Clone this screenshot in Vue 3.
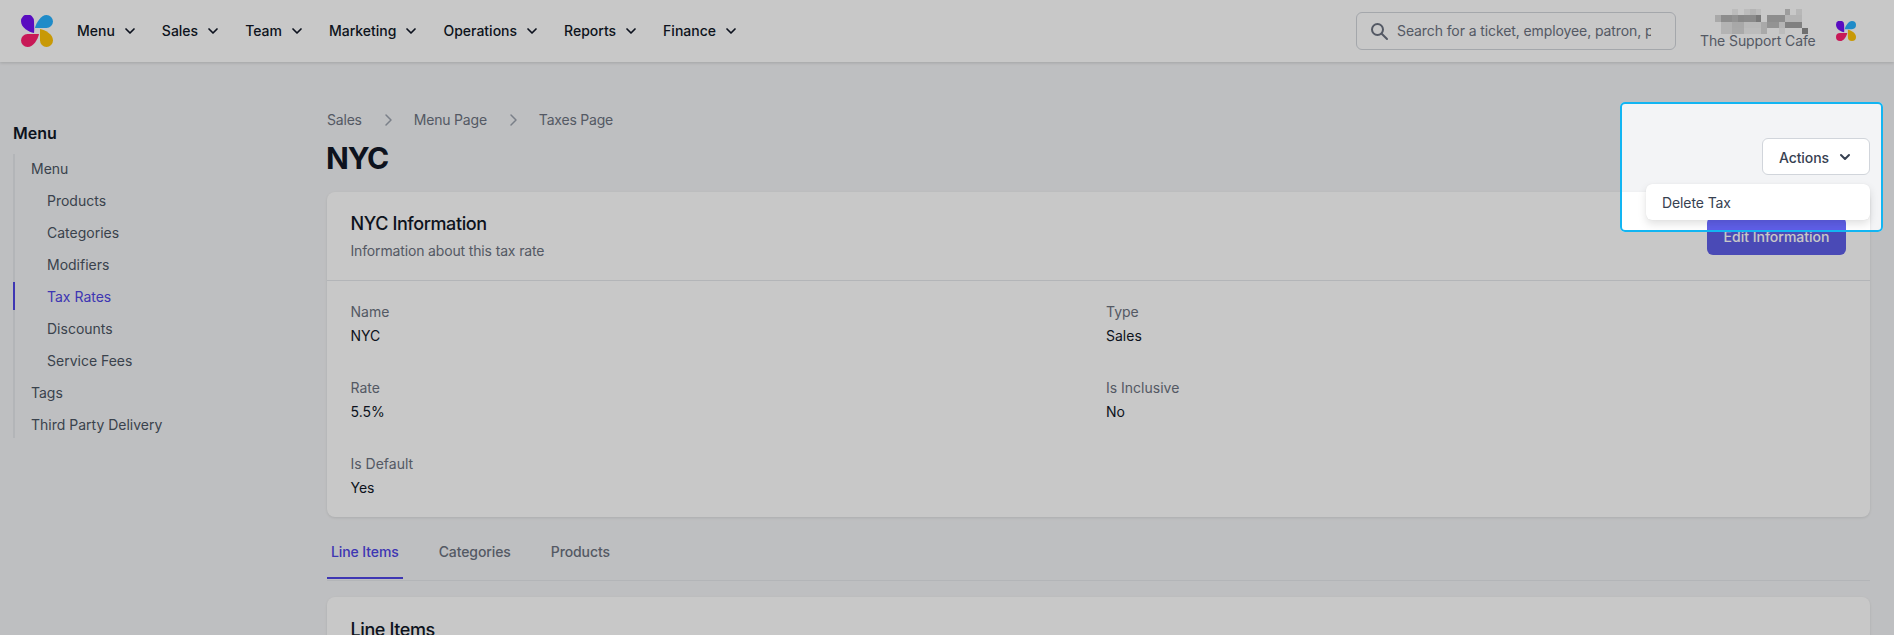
<script setup>
const navItems = ['Menu', 'Sales', 'Team', 'Marketing', 'Operations', 'Reports', 'Finance']

const sideItems = [
  { label: 'Menu' },
  { label: 'Products', sub: true },
  { label: 'Categories', sub: true },
  { label: 'Modifiers', sub: true },
  { label: 'Tax Rates', sub: true, active: true },
  { label: 'Discounts', sub: true },
  { label: 'Service Fees', sub: true },
  { label: 'Tags' },
  { label: 'Third Party Delivery' }
]

const crumbs = ['Sales', 'Menu Page', 'Taxes Page']

const details = [
  { label: 'Name', value: 'NYC' },
  { label: 'Type', value: 'Sales' },
  { label: 'Rate', value: '5.5%' },
  { label: 'Is Inclusive', value: 'No' },
  { label: 'Is Default', value: 'Yes' }
]

const tabs = ['Line Items', 'Categories', 'Products']

// blurred-out account name, one grey value per cell
const mosaic = [
  '  ,  ,  ,f0,  ,f0,e6,f0,  ,  ,  ,  ,c8,  ,ea,  ,  ',
  'd8,b4,b4,bc,ae,b0,b0,9a,  ,b4,b4,b4,e6,e6,e6,  ,  ',
  '  ,e4,e4,d6,d6,ec,ec,ec,d8,bc,bc,e6,a4,a4,a4,  ,  ',
  '  ,e4,e4,d8,d8,f0,f0,f0,d8,  ,  ,f0,  ,  ,  ,8e,  '
].flatMap((row) => row.split(',').map((v) => v.trim()))
</script>

<template>
  <div class="page">
    <header class="topbar">
      <svg class="logo" viewBox="0 0 32 32">
        <path fill="#7210f5" d="M13 18C8 17 0 13 0 6a6.5 6.5 0 0 1 13 0c0 4 .5 8 0 12z" />
        <path fill="#28b2ff" d="M14 13c1-5 6-13 11.500-13a6.500 6.500 0 0 1 0 13z" />
        <path fill="#ff2070" d="M18 19c-1 5-5.500 13-11.500 13a6.500 6.500 0 0 1 0-13z" />
        <path fill="#ffc408" d="M19 14c5 1 13 5 13 11.500a6.500 6.500 0 0 1-13 0z" />
      </svg>
      <nav class="nav">
        <a v-for="item in navItems" :key="item" class="nav-item">
          {{ item }}
          <svg class="chevron" viewBox="0 0 20 20">
            <path d="M6 8l4 4 4-4" />
          </svg>
        </a>
      </nav>
      <div class="search">
        <svg class="search-icon" viewBox="0 0 20 20">
          <circle cx="8.500" cy="8.500" r="5.500" />
          <path d="M12.700 12.700L18 18" />
        </svg>
        <input class="search-input" placeholder="Search for a ticket, employee, patron, payment" />
      </div>
      <div class="account">
        <div class="mosaic">
          <i
            v-for="(cell, i) in mosaic"
            :key="i"
            :style="{ background: cell ? '#' + cell + cell + cell : 'transparent' }"
          ></i>
        </div>
        <div class="cafe">The Support Cafe</div>
      </div>
      <svg class="logo-small" viewBox="0 0 32 32">
        <path fill="#7210f5" d="M13 18C8 17 0 13 0 6a6.5 6.500 0 0 1 13 0c0 4 .5 8 0 12z" />
        <path fill="#28b2ff" d="M14 13c1-5 6-13 11.500-13a6.500 6.500 0 0 1 0 13z" />
        <path fill="#ff2070" d="M18 19c-1 5-5.500 13-11.500 13a6.500 6.500 0 0 1 0-13z" />
        <path fill="#ffc408" d="M19 14c5 1 13 5 13 11.500a6.500 6.500 0 0 1-13 0z" />
      </svg>
    </header>

    <div class="body">
      <aside class="sidebar">
        <h2 class="side-title">Menu</h2>
        <ul class="side-list">
          <li
            v-for="item in sideItems"
            :key="item.label"
            class="side-item"
            :class="{ sub: item.sub, active: item.active }"
          >
            {{ item.label }}
          </li>
        </ul>
      </aside>

      <main class="main">
        <div class="page-head">
          <div>
            <div class="crumbs">
              <template v-for="(crumb, i) in crumbs" :key="crumb">
                <svg v-if="i > 0" class="crumb-sep" viewBox="0 0 20 20">
                  <path d="M8 5l5 5-5 5" />
                </svg>
                <span>{{ crumb }}</span>
              </template>
            </div>
            <h1 class="title">NYC</h1>
          </div>
          <div class="actions">
            <button class="actions-btn">
              Actions
              <svg class="actions-chevron" viewBox="0 0 20 20">
                <path d="M6 8l4 4 4-4" />
              </svg>
            </button>
            <div class="dropdown">Delete Tax</div>
          </div>
        </div>

        <section class="card">
          <div class="card-head">
            <div class="card-text">
              <h3 class="card-title">NYC Information</h3>
              <p class="card-sub">Information about this tax rate</p>
            </div>
            <button class="edit-btn">Edit Information</button>
          </div>
          <div class="details">
            <div v-for="row in details" :key="row.label">
              <div class="detail-label">{{ row.label }}</div>
              <div class="detail-value">{{ row.value }}</div>
            </div>
          </div>
        </section>

        <div class="tabs">
          <a v-for="(tab, i) in tabs" :key="tab" class="tab" :class="{ current: i === 0 }">{{ tab }}</a>
        </div>

        <section class="card lower">
          <h3 class="card-title">Line Items</h3>
        </section>
      </main>
    </div>

    <div class="spotlight"></div>
  </div>
</template>

<style>
html,
body {
  margin: 0;
  height: 635px;
  overflow: hidden;
}
</style>

<style scoped>
.page {
  position: relative;
  width: 1894px;
  height: 635px;
  overflow: hidden;
  background: #f3f4f6;
  font-family: Inter, "Liberation Sans", sans-serif;
  font-size: 14px;
  line-height: 20px;
  color: #111827;
}

.topbar {
  display: flex;
  align-items: center;
  height: 62px;
  background: #fff;
  box-shadow: 0 1px 3px rgba(0, 0, 0, 0.15);
  position: relative;
}

.logo {
  width: 32px;
  height: 32px;
  margin-left: 21px;
  flex: none;
}

.nav {
  display: flex;
  align-items: center;
  gap: 22px;
  margin-left: 24px;
  flex: 1;
}

.nav-item {
  display: flex;
  align-items: center;
  gap: 5px;
  font-weight: 500;
  color: #111827;
}

.chevron {
  width: 20px;
  height: 20px;
}

.chevron path,
.actions-chevron path {
  fill: none;
  stroke: #111827;
  stroke-width: 1.700;
  stroke-linecap: round;
  stroke-linejoin: round;
}

.search {
  position: relative;
  width: 320px;
  height: 38px;
  margin-right: 24px;
}

.search-icon {
  position: absolute;
  left: 13px;
  top: 9px;
  width: 20px;
  height: 20px;
  fill: none;
  stroke: #6b7280;
  stroke-width: 2;
  stroke-linecap: round;
}

.search-input {
  box-sizing: border-box;
  width: 100%;
  height: 100%;
  padding: 0 24px 2px 40px;
  border: 1px solid #d1d5db;
  border-radius: 6px;
  background: #fff;
  font: inherit;
  letter-spacing: -0.1px;
  outline: none;
}

.search-input::placeholder {
  color: #6b7280;
  opacity: 1;
}

.account {
  width: 114px;
  margin-top: -2px;
}

.mosaic {
  display: grid;
  grid-template-columns: repeat(17, 5.8px);
  grid-auto-rows: 6.200px;
  margin-left: 15px;
}

.cafe {
  color: #6b7280;
  margin-top: -3px;
  white-space: nowrap;
  letter-spacing: -0.1px;
}

.logo-small {
  width: 20px;
  height: 20px;
  margin: 0 38px 0 22px;
  flex: none;
}

.body {
  display: flex;
}

.sidebar {
  box-sizing: border-box;
  width: 327px;
  padding: 59px 0 0 13px;
  flex: none;
}

.side-title {
  margin: 0 0 9px;
  font-size: 16px;
  line-height: 24px;
  font-weight: 600;
}

.side-list {
  width: 240px;
  margin: 0;
  padding: 0;
  list-style: none;
  display: flex;
  flex-direction: column;
  gap: 4px;
  border-left: 2px solid #e5e7eb;
}

.side-item {
  box-sizing: border-box;
  height: 28px;
  line-height: 28px;
  padding: 1px 0 0 16px;
  color: #4b5563;
}

.side-item.sub {
  padding-left: 32px;
}

.side-item.active {
  margin-left: -2px;
  border-left: 2px solid #4f46e5;
  color: #4f46e5;
}

.main {
  flex: 1;
  min-width: 0;
  padding: 48px 24px 0 0;
}

.page-head {
  display: flex;
  justify-content: space-between;
  align-items: flex-end;
  margin-bottom: 17px;
}

.crumbs {
  display: flex;
  align-items: center;
  gap: 16px;
  color: #6b7280;
  letter-spacing: -0.2px;
}

.crumb-sep {
  width: 20px;
  height: 20px;
  fill: none;
  stroke: #9ca3af;
  stroke-width: 1.500;
  stroke-linecap: round;
  stroke-linejoin: round;
}

.title {
  margin: 10px 0 -1px -1px;
  font-size: 30px;
  line-height: 36px;
  font-weight: 700;
  letter-spacing: -1.200px;
}

.actions {
  position: relative;
}

.actions-btn {
  display: flex;
  align-items: center;
  gap: 6px;
  box-sizing: border-box;
  width: 108px;
  height: 37px;
  padding: 2px 0 0 16px;
  border: 1px solid #d1d5db;
  border-radius: 6px;
  background: #fff;
  font: inherit;
  font-weight: 500;
  letter-spacing: -0.1px;
  color: #374151;
}

.actions-chevron {
  width: 20px;
  height: 20px;
  margin-top: -2px;
}

.actions-chevron path {
  stroke: #374151;
  stroke-width: 2;
}

.dropdown {
  position: absolute;
  top: 46px;
  right: 0;
  z-index: 5;
  box-sizing: border-box;
  width: 224px;
  height: 36px;
  padding: 9px 16px 7px;
  border-radius: 6px;
  background: #fff;
  box-shadow: 0 4px 8px rgba(0, 0, 0, 0.12), 0 0 1px rgba(0, 0, 0, 0.1);
  color: #374151;
  letter-spacing: -0.1px;
}

.card {
  background: #fff;
  border-radius: 8px;
  box-shadow: 0 1px 3px rgba(0, 0, 0, 0.1);
}

.card-head {
  display: flex;
  justify-content: space-between;
  align-items: center;
  height: 89px;
  box-sizing: border-box;
  padding: 0 24px 0 23.500px;
  border-bottom: 1px solid #e5e7eb;
}

.card-text {
  margin-top: -1px;
}

.card-title {
  margin: 0;
  font-size: 18px;
  line-height: 28px;
  font-weight: 500;
  letter-spacing: -0.4px;
}

.card-sub {
  margin: 3px 0 0;
  color: #6b7280;
  letter-spacing: -0.15px;
}

.edit-btn {
  width: 139px;
  height: 38px;
  border: 0;
  padding: 2px 0 0;
  border-radius: 6px;
  background: #5f5fe8;
  color: #fff;
  font: inherit;
  font-weight: 500;
}

.details {
  display: grid;
  grid-template-columns: 755.500px 1fr;
  row-gap: 32px;
  padding: 21px 24px 19px 23.500px;
}

.detail-label {
  color: #6b7280;
}

.detail-value {
  margin-top: 4px;
}

.tabs {
  display: flex;
  gap: 32px;
  margin: 24px 0 16px;
  padding-bottom: 1px;
  border-bottom: 1px solid #e5e7eb;
}

.tab {
  padding: 1px 4px 15px;
  border-bottom: 2px solid transparent;
  font-weight: 500;
  color: #6b7280;
  letter-spacing: -0.1px;
}

.tab.current {
  color: #4f46e5;
  border-bottom-color: #4f46e5;
}

.lower {
  height: 200px;
  box-sizing: border-box;
  padding: 19px 24px 0 23.500px;
}

/* tour highlight: the huge shadow dims everything except this hole */
.spotlight {
  position: absolute;
  left: 1620px;
  top: 102px;
  width: 263px;
  height: 130px;
  box-sizing: border-box;
  border: 2.500px solid #12b5f2;
  border-radius: 5px;
  box-shadow: 0 0 0 2000px rgba(0, 0, 0, 0.215);
  z-index: 10;
}
</style>
